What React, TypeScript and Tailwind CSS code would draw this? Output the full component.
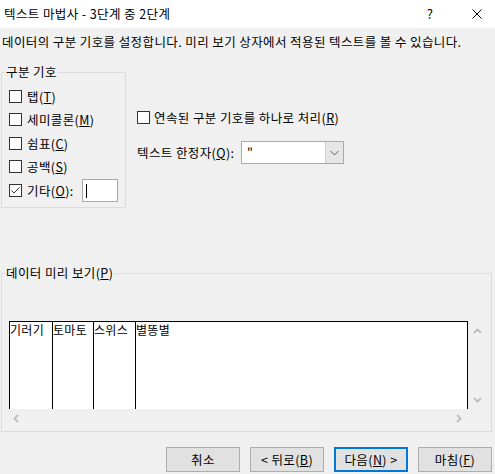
import React from 'react';

function Check({ checked = false }: { checked?: boolean }) {
  return (
    <span className="flex h-[13px] w-[13px] shrink-0 items-center justify-center border border-[#333333] bg-white">
      {checked && (
        <svg width="11" height="11" viewBox="0 0 11 11">
          <path d="M1.5 5.5 L4 8 L9.5 2.5" fill="none" stroke="#333333" strokeWidth="1" />
        </svg>
      )}
    </span>
  );
}

function U({ children }: { children: React.ReactNode }) {
  return <span className="underline underline-offset-[1px]">{children}</span>;
}

function Legend({ children }: { children: React.ReactNode }) {
  return <div className="-mt-[9px] ml-[3px] w-fit bg-[#f0f0f0] px-[1px] leading-[16px]">{children}</div>;
}

function Chevron({ dir }: { dir: 'up' | 'down' | 'left' | 'right' }) {
  const pts: Record<string, string> = {
    up: '1,5 4.5,1.5 8,5',
    down: '1,1 4.5,4.5 8,1',
    left: '5,1 1.5,4.5 5,8',
    right: '1,1 4.5,4.5 1,8',
  };
  const horiz = dir === 'up' || dir === 'down';
  return (
    <svg width={horiz ? 9 : 6} height={horiz ? 6 : 9} viewBox={horiz ? '0 0 9 6' : '0 0 6 9'}>
      <polyline points={pts[dir]} fill="none" stroke="#bdbdbd" strokeWidth="1.8" />
    </svg>
  );
}

function Btn({ children, primary = false }: { children: React.ReactNode; primary?: boolean }) {
  return (
    <div
      className={
        primary
          ? 'flex h-[25px] w-[74px] items-center justify-center border-2 border-[#0078d7] bg-[#e1e1e1] leading-[16px]'
          : 'flex h-[25px] w-[74px] items-center justify-center border border-[#adadad] bg-[#e1e1e1] leading-[16px]'
      }
    >
      {children}
    </div>
  );
}

export default function App() {
  return (
    <div className="h-[474px] w-[495px] overflow-hidden bg-[#f0f0f0] font-['Noto_Sans_CJK_KR',sans-serif] text-[12.5px] tracking-[0.4px] text-black">
      {/* Title bar */}
      <div className="flex h-[28px] items-center bg-white pl-[4px]">
        <div className="flex-1 leading-[16px]">텍스트 마법사 - 3단계 중 2단계</div>
        <span className="w-[16px] text-center text-[13px] leading-[16px]">?</span>
        <svg className="ml-[34px] mr-[13px]" width="10" height="10" viewBox="0 0 10 10">
          <path d="M0.5 0.5 L9.5 9.5 M9.5 0.5 L0.5 9.5" stroke="#000" strokeWidth="1" />
        </svg>
      </div>

      {/* Description */}
      <div className="whitespace-nowrap px-[2px] pt-[6px] leading-[16px]">
        데이터의 구분 기호를 설정합니다. 미리 보기 상자에서 적용된 텍스트를 볼 수 있습니다.
      </div>

      {/* Delimiters row */}
      <div className="mt-[22px] flex">
        <div className="ml-[1px] flex h-[136px] w-[125px] flex-col border border-[#dcdcdc]">
          <Legend>구분 기호</Legend>
          <div className="flex flex-col pl-[7px]">
            <div className="mt-[5px] flex h-[23px] items-center">
              <Check />
              <span className="ml-[5px] leading-[16px]">
                탭(<U>T</U>)
              </span>
            </div>
            <div className="flex h-[23px] items-center">
              <Check />
              <span className="ml-[5px] leading-[16px]">
                세미콜론(<U>M</U>)
              </span>
            </div>
            <div className="mt-[1px] flex h-[23px] items-center">
              <Check />
              <span className="ml-[5px] leading-[16px]">
                쉼표(<U>C</U>)
              </span>
            </div>
            <div className="flex h-[23px] items-center">
              <Check />
              <span className="ml-[5px] leading-[16px]">
                공백(<U>S</U>)
              </span>
            </div>
            <div className="mt-[1px] flex h-[23px] items-center">
              <Check checked />
              <span className="ml-[5px] w-[55px] leading-[16px]">
                기타(<U>O</U>):
              </span>
              <div className="flex h-[23px] w-[36px] items-center border border-[#a9a9a9] bg-white pl-[3px]">
                <div className="h-[14px] w-[1px] bg-black" />
              </div>
            </div>
          </div>
        </div>

        <div className="ml-[11px] flex flex-col">
          <div className="mt-[37px] flex h-[17px] items-center">
            <Check />
            <span className="ml-[4px] whitespace-nowrap leading-[16px]">
              연속된 구분 기호를 하나로 처리(<U>R</U>)
            </span>
          </div>
          <div className="mt-[15px] flex h-[23px] items-center">
            <span className="w-[104px] whitespace-nowrap leading-[16px]">
              텍스트 한정자(<U>Q</U>):
            </span>
            <div className="flex h-[23px] w-[103px] border border-[#a9a9a9] bg-white">
              <div className="flex-1 pl-[5px] leading-[20px]">"</div>
              <div className="flex w-[18px] items-center justify-center border-l border-[#cfcfcf] bg-[#e6e6e6]">
                <svg width="9" height="6" viewBox="0 0 9 6">
                  <polyline points="0.5,1 4.5,5 8.5,1" fill="none" stroke="#606060" strokeWidth="1" />
                </svg>
              </div>
            </div>
          </div>
        </div>
      </div>

      {/* Preview group */}
      <div className="ml-[1px] mt-[65px] flex h-[159px] w-[491px] flex-col border border-[#dcdcdc]">
        <Legend>
          데이터 미리 보기(<U>P</U>)
        </Legend>
        <div className="ml-[7px] mt-[40px] grid w-[477px] grid-cols-[459px_18px] grid-rows-[88px_18px]">
          <div className="flex border-l border-t border-black bg-white text-[12px] leading-[16px] tracking-[0.3px]">
            <div className="w-[43px] border-r border-black">기러기</div>
            <div className="w-[41px] border-r border-black">토마토</div>
            <div className="w-[42px] border-r border-black">스위스</div>
            <div className="w-[332px] border-r border-black">별똥별</div>
          </div>
          <div className="flex flex-col items-center justify-between pb-[6px] pt-[7px]">
            <Chevron dir="up" />
            <Chevron dir="down" />
          </div>
          <div className="flex items-center justify-between pl-[4px] pr-[6px]">
            <Chevron dir="left" />
            <Chevron dir="right" />
          </div>
          <div />
        </div>
      </div>

      {/* Buttons */}
      <div className="mt-[15px] flex justify-end gap-[10px] pr-[3px]">
        <Btn>취소</Btn>
        <Btn>
          &lt; 뒤로(<U>B</U>)
        </Btn>
        <Btn primary>
          다음(<U>N</U>) &gt;
        </Btn>
        <Btn>
          마침(<U>F</U>)
        </Btn>
      </div>
    </div>
  );
}
